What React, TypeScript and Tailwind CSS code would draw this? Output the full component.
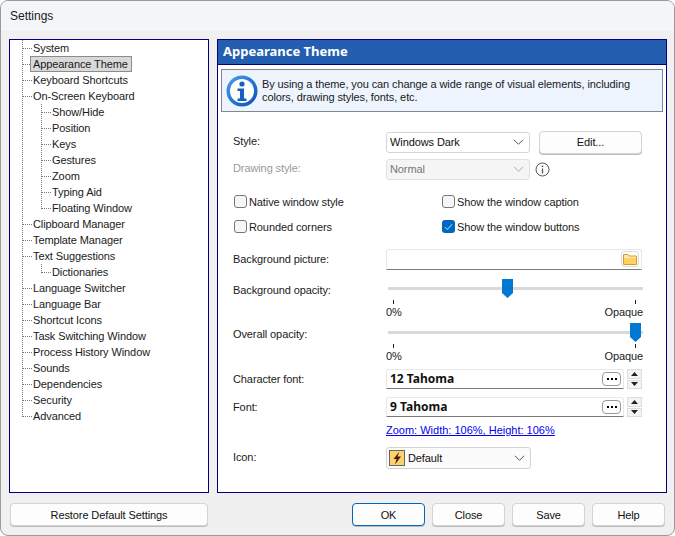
import React from "react";

const tree: [string, number, boolean?][] = [
  ["System", 0], ["Appearance Theme", 0], ["Keyboard Shortcuts", 0], ["On-Screen Keyboard", 0],
  ["Show/Hide", 1], ["Position", 1], ["Keys", 1], ["Gestures", 1], ["Zoom", 1], ["Typing Aid", 1], ["Floating Window", 1, true],
  ["Clipboard Manager", 0], ["Template Manager", 0], ["Text Suggestions", 0], ["Dictionaries", 1, true],
  ["Language Switcher", 0], ["Language Bar", 0], ["Shortcut Icons", 0], ["Task Switching Window", 0], ["Process History Window", 0],
  ["Sounds", 0], ["Dependencies", 0], ["Security", 0], ["Advanced", 0],
];

function Connector({ level, last, end }: { level: number; last?: boolean; end?: boolean }) {
  return (
    <svg width={level ? 42 : 23} height={16} className="shrink-0" shapeRendering="crispEdges">
      <g stroke="#777" strokeDasharray="1 1" fill="none">
        {!end && <line x1="12.5" y1={0} x2="12.5" y2={16} />}
        {end && <line x1="12.5" y1={0} x2="12.5" y2={8.5} />}
        {level === 0 && <line x1="13" y1="8.5" x2="22" y2="8.5" />}
        {level === 1 && <line x1="31.5" y1={0} x2="31.5" y2={last ? 8.5 : 16} />}
        {level === 1 && <line x1="32" y1="8.5" x2="41" y2="8.5" />}
      </g>
    </svg>
  );
}

function Btn({ w, children, primary }: { w: string; children: React.ReactNode; primary?: boolean }) {
  return (
    <button className={`${w} h-[23px] rounded-[4px] bg-[#fdfdfd] text-[#111] border ${primary ? "border-[#0067c0] border-[1.5px]" : "border-[#d4d4d4]"} shadow-[0_1px_0_#bdbdbd]`}>
      {children}
    </button>
  );
}

function Chevron({ color = "#555" }: { color?: string }) {
  return (
    <svg width="11" height="6" viewBox="0 0 11 6" fill="none"><path d="M1 .8l4.5 4.5L10 .8" stroke={color} strokeWidth="1" /></svg>
  );
}

function Check({ checked, label, cls }: { checked?: boolean; label: string; cls?: string }) {
  return (
    <div className={`flex items-center gap-[2px] h-[15px] ${cls ?? ""}`}>
      {checked ? (
        <span className="w-[13px] h-[13px] rounded-[3px] bg-[#0067c0] flex items-center justify-center ml-[1px]">
          <svg width="9" height="8" viewBox="0 0 9 8" fill="none"><path d="M1 4.2l2.3 2.3L8 1.3" stroke="#cfe4f7" strokeWidth="1" /></svg>
        </span>
      ) : (
        <span className="w-[13px] h-[13px] rounded-[3px] bg-[#f6f6f6] border border-[#777] ml-[1px]" />
      )}
      <span>{label}</span>
    </div>
  );
}

function Slider({ pos }: { pos: string }) {
  return (
    <div className="w-[256px]">
      <div className="relative h-[20px] pt-[8px]">
        <div className="h-[3px] bg-[#d9d9d9] ml-[1px]" />
        <svg width="11" height="19" viewBox="0 0 11 19" className={`absolute top-0 ${pos}`}>
          <path d="M0 0h11v14l-5.5 5L0 14z" fill="#0078d4" />
        </svg>
      </div>
      <div className="flex justify-between pl-[6px] pr-[7px] h-[4px] mt-[1px]">
        <span className="w-px h-[4px] bg-[#222]" />
        <span className="w-px h-[4px] bg-[#222]" />
      </div>
      <div className="flex justify-between h-[14px] leading-[14px] mt-[1px] -ml-[1px]">
        <span>0%</span><span>Opaque</span>
      </div>
    </div>
  );
}

function FontRow({ value }: { value: string }) {
  return (
    <div className="flex">
      <div className="w-[238px] h-[20px] bg-white border border-[#e8e8e8] border-b-[#7a7a7a] rounded-t-[3px] flex items-center pl-[3px] pr-[2px] font-bold text-[12px] tracking-normal text-[#111]" style={{ fontFamily: '"Noto Sans", sans-serif' }}>
        <span className="flex-1">{value}</span>
        <span className="w-[19px] h-[14px] border border-[#999] rounded-[4px] flex items-center justify-center gap-[2px]">
          <i className="w-[2px] h-[2px] bg-black" /><i className="w-[2px] h-[2px] bg-black" /><i className="w-[2px] h-[2px] bg-black" />
        </span>
      </div>
      <div className="ml-[3px] w-[15px] h-[20px] flex flex-col gap-px">
        <span className="h-[10px] bg-[#f4f4f4] border border-[#ddd] flex items-center justify-center">
          <svg width="7" height="4"><path d="M0 4h7L3.5 0z" fill="#222" /></svg>
        </span>
        <span className="h-[10px] bg-[#f4f4f4] border border-[#ddd] flex items-center justify-center">
          <svg width="7" height="4"><path d="M0 0h7L3.5 4z" fill="#222" /></svg>
        </span>
      </div>
    </div>
  );
}

export default function App() {
  return (
    <div className="w-[675px] h-[536px] overflow-hidden bg-[#f0f0f0] border border-[#9a9a9a] rounded-t-[8px] rounded-b-[8px] text-[11px] tracking-[-0.1px] leading-[16px] text-[#1a1a1a] flex flex-col" style={{ fontFamily: '"Liberation Sans", sans-serif' }}>
      <div className="h-[30px] shrink-0 bg-[#f3f6f9] pl-[9px] flex items-center text-[12px] tracking-normal">Settings</div>
      <div className="flex gap-[8px] pl-[8px] pt-[8px]">
        <div className="w-[200px] h-[454px] bg-white border border-[#000080]">
          {tree.map(([t, lvl, last], i) => (
            <div key={t} className="flex items-center h-[16px]">
              <Connector level={lvl} last={last} end={i === tree.length - 1} />
              {t === "Appearance Theme" ? (
                <span className="bg-[#d9d9d9] border border-[#8c8c8c] -ml-[3px] pl-[2px] pr-[3px] h-[16px] leading-[14px] whitespace-nowrap">{t}</span>
              ) : (
                <span className="whitespace-nowrap">{t}</span>
              )}
            </div>
          ))}
        </div>
        <div className="w-[450px] h-[454px] bg-white border border-[#000080] flex flex-col">
          <div className="h-[25px] shrink-0 bg-[#245eb0] border-b border-[#000080] text-white font-bold text-[13px] tracking-normal pl-[5px] pb-[2px] flex items-center" style={{ fontFamily: '"Noto Sans", sans-serif' }}>Appearance Theme</div>
          <div className="mx-[3px] mt-[4px] h-[43px] bg-[#edf4fd] border border-[#808890] flex items-center pl-[4px] gap-[4px]">
            <svg width="32" height="32" viewBox="0 0 32 32" className="shrink-0">
              <defs>
                <linearGradient id="g" x1="0" y1="0" x2="1" y2="1"><stop offset="0" stopColor="#4aa0ee" /><stop offset="1" stopColor="#0a4fb5" /></linearGradient>
              </defs>
              <circle cx="16" cy="16" r="15.5" fill="url(#g)" />
              <circle cx="16" cy="16" r="12" fill="#fff" />
              <circle cx="16" cy="9" r="2.6" fill="#1560c0" />
              <path d="M11.5 13.5h6.5v10h2.5v2.5h-9v-2.5h2.5v-7.5h-2.5z" fill="#1560c0" />
            </svg>
            <div className="leading-[13px] whitespace-nowrap">By using a theme, you can change a wide range of visual elements, including<br />colors, drawing styles, fonts, etc.</div>
          </div>
          <div className="pl-[15px] flex flex-col">
            <div className="flex items-center mt-[19px] h-[22px]">
              <span className="w-[153px] -mt-[2px]">Style:</span>
              <div className="w-[144px] h-[21px] bg-white border border-[#d4d4d4] rounded-[3px] flex items-center justify-between pl-[3px] pr-[5px] text-[#111]">Windows Dark<Chevron /></div>
              <div className="ml-[9px]"><Btn w="w-[103px]">Edit...</Btn></div>
            </div>
            <div className="flex items-center mt-[5px] h-[22px]">
              <span className="w-[153px] -mt-[2px] text-[#9a9a9a]">Drawing style:</span>
              <div className="w-[144px] h-[21px] bg-[#f5f5f5] border border-[#e0e0e0] rounded-[3px] flex items-center justify-between pl-[3px] pr-[5px] text-[#777]">Normal<Chevron color="#aaa" /></div>
              <svg width="15" height="15" viewBox="0 0 15 15" className="ml-[5px]" fill="none">
                <circle cx="7.5" cy="7.5" r="6.5" stroke="#555" />
                <path d="M7.5 6.5v5" stroke="#555" strokeWidth="1.3" /><circle cx="7.5" cy="4.3" r="0.9" fill="#555" />
              </svg>
            </div>
            <div className="grid grid-cols-[208px_1fr] mt-[14px] gap-y-[10px]">
              <Check label="Native window style" />
              <Check label="Show the window caption" />
              <Check label="Rounded corners" />
              <Check checked label="Show the window buttons" />
            </div>
            <div className="flex items-center mt-[14px] h-[22px]">
              <span className="w-[153px]">Background picture:</span>
              <div className="w-[256px] h-[21px] bg-white border border-[#e8e8e8] border-b-[#7a7a7a] rounded-t-[3px] flex items-center justify-end pr-[2px]">
                <span className="w-[18px] h-[16px] border border-[#ddd] rounded-[3px] flex items-center justify-center">
                  <svg width="14" height="12" viewBox="0 0 14 12"><path d="M.5 1.5h4.5l1 1.5h7.5v8.5H.5z" fill="#ffe9a8" stroke="#d59a30" /><path d="M1 5h12v6H1z" fill="#ffd25f" /></svg>
                </span>
              </div>
            </div>
            <div className="flex mt-[9px]">
              <span className="w-[154px] mt-[3px]">Background opacity:</span>
              <Slider pos="left-[115px]" />
            </div>
            <div className="flex mt-[4px]">
              <span className="w-[154px] mt-[3px]">Overall opacity:</span>
              <Slider pos="right-[2px]" />
            </div>
            <div className="flex mt-[6px]">
              <span className="w-[153px] mt-[2px]">Character font:</span>
              <FontRow value="12 Tahoma" />
            </div>
            <div className="flex mt-[8px]">
              <span className="w-[153px] mt-[2px]">Font:</span>
              <FontRow value="9 Tahoma" />
            </div>
            <div className="pl-[153px] mt-[5px] h-[16px] text-[#0000ee] underline tracking-normal">Zoom: Width: 106%, Height: 106%</div>
            <div className="flex items-center mt-[9px] h-[22px]">
              <span className="w-[153px] -mt-[2px]">Icon:</span>
              <div className="w-[145px] h-[22px] bg-[#fbfbfb] border border-[#d4d4d4] rounded-[3px] flex items-center pl-[2px] pr-[5px] gap-[3px] text-[#111]">
                <svg width="16" height="16" viewBox="0 0 16 16" className="shrink-0"><rect x=".5" y=".5" width="15" height="15" fill="#fbd26b" stroke="#666" /><path d="M10.5 1.5L4.5 9h3L6 14.5 12 6.5H8.5z" fill="#4a1a10" /></svg>
                <span className="flex-1">Default</span><Chevron />
              </div>
            </div>
          </div>
        </div>
      </div>
      <div className="flex mt-[10px] pl-[9px]">
        <Btn w="w-[198px]">Restore Default Settings</Btn>
        <div className="ml-[144px] flex gap-[7px]">
          <Btn w="w-[73px]" primary>OK</Btn>
          <Btn w="w-[73px]">Close</Btn>
          <Btn w="w-[73px]">Save</Btn>
          <Btn w="w-[73px]">Help</Btn>
        </div>
      </div>
    </div>
  );
}
